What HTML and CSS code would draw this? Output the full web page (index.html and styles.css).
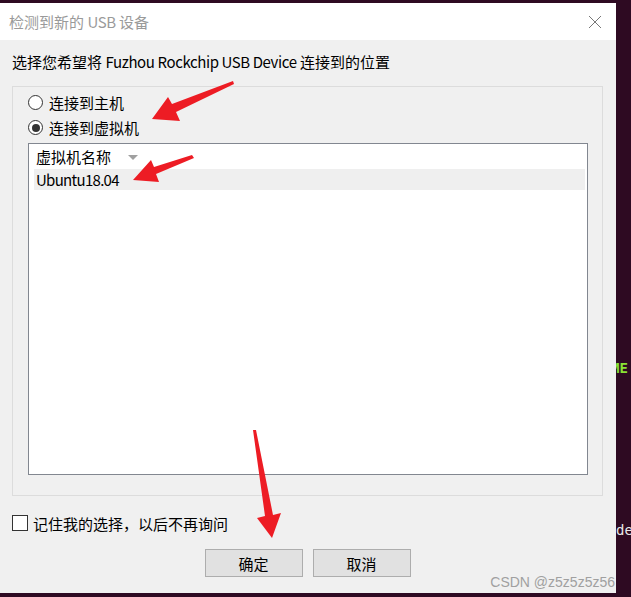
FILE: index.html
```html
<!DOCTYPE html>
<html lang="zh-CN">
<head>
<meta charset="utf-8">
<title>检测到新的 USB 设备</title>
<link rel="stylesheet" href="styles.css">
</head>
<body>
<div class="screen">
  <div class="dialog">
    <div class="titlebar">
      <span class="title">检测到新的 <span class="latin">USB</span> 设备</span>
      <svg class="close" width="14" height="14" viewBox="0 0 14 14"><path d="M1 1L13 13M13 1L1 13" stroke="#777" stroke-width="1" fill="none"/></svg>
    </div>
    <div class="body">
      <p class="prompt">选择您希望将 <span class="latin">Fuzhou Rockchip USB Device</span> 连接到的位置</p>
      <div class="group">
        <label class="radio-row"><span class="radio"></span>连接到主机</label>
        <label class="radio-row"><span class="radio checked"></span>连接到虚拟机</label>
        <div class="list">
          <div class="list-head"><span>虚拟机名称</span><span class="sort"></span></div>
          <div class="list-row selected"><span class="latin">Ubuntu18.04</span></div>
        </div>
      </div>
      <label class="check-row"><span class="checkbox"></span>记住我的选择，以后不再询问</label>
      <div class="buttons"><button class="btn">确定</button><button class="btn">取消</button></div>
    </div>
  </div>
  <div class="side">
    <div class="me">ME</div>
    <div class="de">de1</div>
  </div>
  <div class="watermark">CSDN @z5z5z5z56</div>
  <svg class="arrows" width="631" height="597" viewBox="0 0 631 597">
    <polygon points="233,81 172,104 168,97 152,119 180,121 176,112 234,84" fill="#ed1c24"/>
    <polygon points="192,155 154,167 151,160 133,180 159,182 156,174 194,158" fill="#ed1c24"/>
    <polygon points="253,430 265,516 257,518 272,538 281,513 273,515 256,430" fill="#ed1c24"/>
  </svg>
</div>
</body>
</html>
```
FILE: styles.css
```css
* { box-sizing: border-box; }
body {
  margin: 0;
  background: #2e0a22;
  font-family: "Noto Sans CJK SC", "Noto Sans", sans-serif;
  color: #000;
}
.latin { letter-spacing: -0.4px; }
.screen {
  position: relative;
  width: 631px;
  height: 597px;
  display: flex;
  overflow: hidden;
}
.dialog {
  flex: none;
  width: 616px;
  height: 590px;
  margin-top: 3px;
  background: #f0f0f0;
  display: flex;
  flex-direction: column;
}
.titlebar {
  height: 37px;
  background: #fff;
  display: flex;
  align-items: center;
  justify-content: space-between;
  padding: 0 14px 0 9px;
}
.title {
  font-size: 15px;
  color: #9a9a9a;
}
.close { display: block; }
.body {
  padding: 0 13px 0 12px;
}
.prompt {
  margin: 12px 0 0;
  height: 20px;
  line-height: 20px;
  font-size: 15px;
}
.group {
  margin-top: 14px;
  height: 410px;
  border: 1px solid #dcdcdc;
  padding: 5px 14px 0 15px;
}
.radio-row {
  display: flex;
  align-items: center;
  gap: 6px;
  height: 21px;
  font-size: 15px;
  margin-bottom: 4px;
}
.radio {
  width: 15px;
  height: 15px;
  border: 1px solid #333;
  border-radius: 50%;
  background: #fff;
  display: flex;
  align-items: center;
  justify-content: center;
}
.radio.checked::after {
  content: "";
  width: 8px;
  height: 8px;
  border-radius: 50%;
  background: #333;
}
.list {
  margin-top: 5px;
  height: 332px;
  border: 1px solid #828790;
  background: #fff;
}
.list-head {
  height: 25px;
  display: flex;
  align-items: center;
  padding-left: 7px;
  font-size: 15px;
}
.sort {
  margin-left: 17px;
  margin-top: 2px;
  width: 0;
  height: 0;
  border-left: 5px solid transparent;
  border-right: 5px solid transparent;
  border-top: 5px solid #a0a0a0;
}
.list-row {
  height: 21px;
  margin: 0 2px 0 5px;
  padding-left: 2px;
  line-height: 21px;
  font-size: 15px;
}
.list-row .latin { letter-spacing: -0.7px; }
.list-row.selected { background: #efefef; }
.check-row {
  margin-top: 19px;
  height: 16px;
  display: flex;
  align-items: center;
  gap: 5px;
  font-size: 15px;
}
.checkbox {
  width: 16px;
  height: 16px;
  border: 1px solid #333;
  background: #fff;
}
.buttons {
  margin-top: 18px;
  display: flex;
  justify-content: center;
  gap: 10px;
}
.btn {
  width: 98px;
  height: 28px;
  padding: 0;
  border: 1px solid #adadad;
  background: #e1e1e1;
  font-family: inherit;
  font-size: 15px;
  color: #000;
}
.side {
  flex: none;
  width: 15px;
  overflow: hidden;
  white-space: nowrap;
  font-family: "DejaVu Sans Mono", monospace;
  font-size: 14px;
  line-height: 16px;
}
.me {
  margin-top: 360px;
  margin-left: -5px;
  color: #8ae234;
  font-weight: bold;
}
.de {
  margin-top: 146px;
  color: #e8e8e8;
}
.watermark {
  position: absolute;
  right: 16px;
  top: 573px;
  font-family: "Liberation Sans", sans-serif;
  font-size: 14px;
  line-height: 18px;
  color: #a0a0a0;
}
.arrows {
  position: absolute;
  left: 0;
  top: 0;
  pointer-events: none;
}
```
